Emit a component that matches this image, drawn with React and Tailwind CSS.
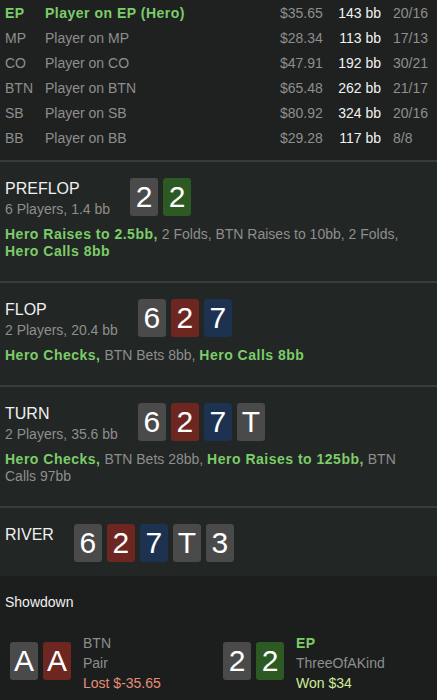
import React from 'react';

const players = [
    { pos: 'EP', name: 'Player on EP (Hero)', money: '$35.65', bb: '143 bb', ratio: '20/16', hero: true },
    { pos: 'MP', name: 'Player on MP', money: '$28.34', bb: '113 bb', ratio: '17/13' },
    { pos: 'CO', name: 'Player on CO', money: '$47.91', bb: '192 bb', ratio: '30/21' },
    { pos: 'BTN', name: 'Player on BTN', money: '$65.48', bb: '262 bb', ratio: '21/17' },
    { pos: 'SB', name: 'Player on SB', money: '$80.92', bb: '324 bb', ratio: '20/16' },
    { pos: 'BB', name: 'Player on BB', money: '$29.28', bb: '117 bb', ratio: '8/8' },
];

const suitBg = {
    s: 'bg-[#4a4a4a]',
    h: 'bg-[#6e2620]',
    d: 'bg-[#1d3150]',
    c: 'bg-[#2c5a22]',
};

const Card = ({ rank, suit }) => (
    <div className={`w-[28px] h-[38px] rounded-[3px] flex items-center justify-center text-[30px] leading-none text-white ${suitBg[suit]}`}>
        {rank}
    </div>
);

const Cards = ({ cards }) => (
    <div className="flex gap-[5px]">
        {cards.map((c, i) => <Card key={i} rank={c[0]} suit={c[1]} />)}
    </div>
);

const Hero = ({ children }) => <span className="font-bold tracking-[0.5px] text-[#7ccc6a]">{children}</span>;
const Other = ({ children }) => <span className="text-[#8e8e8e]">{children}</span>;

const Street = ({ name, sub, cards, children, last }) => (
    <section className={`border-t-2 border-[#383c3a] bg-[#222624] pl-[5px] pr-2 pt-4 ${last ? 'pb-[14px]' : 'pb-[21px]'}`}>
        <div className="flex items-start gap-5 h-[38px]">
            <div>
                <div className="text-[16px] leading-[22px] text-[#f0f0f0]">{name}</div>
                {sub && <div className="text-[14px] leading-[18px] text-[#8e8e8e] whitespace-nowrap">{sub}</div>}
            </div>
            <Cards cards={cards} />
        </div>
        {children && <p className="mt-[10px] text-[14px] leading-[17px] whitespace-nowrap">{children}</p>}
    </section>
);

const App = () => {
    return (
        <div className="w-[437px] h-[700px] overflow-hidden bg-[#1e2120] font-['Liberation_Sans',Arial,sans-serif] flex flex-col">
            <div className="pt-[1px] pb-[9px]">
                {players.map(p => (
                    <div key={p.pos} className="flex items-center h-[25px] text-[14px] whitespace-nowrap">
                        <span className={`w-[45px] pl-[5px] ${p.hero ? 'font-bold tracking-[0.5px] text-[#7ccc6a]' : 'text-[#8e8e8e]'}`}>{p.pos}</span>
                        <span className={`w-[235px] ${p.hero ? 'font-bold tracking-[0.5px] text-[#7ccc6a]' : 'text-[#8e8e8e]'}`}>{p.name}</span>
                        <span className="w-[56px] text-[#8e8e8e]">{p.money}</span>
                        <span className="w-[45px] text-right text-[#f2f2f2]">{p.bb}</span>
                        <span className="pl-[12px] text-[#8e8e8e]">{p.ratio}</span>
                    </div>
                ))}
            </div>

            <Street name="PREFLOP" sub="6 Players, 1.4 bb" cards={['2s', '2c']}>
                <Hero>Hero Raises to 2.5bb,</Hero> <Other>2 Folds, BTN Raises to 10bb, 2 Folds,</Other>
                <br />
                <Hero>Hero Calls 8bb</Hero>
            </Street>

            <Street name="FLOP" sub="2 Players, 20.4 bb" cards={['6s', '2h', '7d']}>
                <Hero>Hero Checks,</Hero> <Other>BTN Bets 8bb,</Other> <Hero>Hero Calls 8bb</Hero>
            </Street>

            <Street name="TURN" sub="2 Players, 35.6 bb" cards={['6s', '2h', '7d', 'Ts']}>
                <Hero>Hero Checks,</Hero> <Other>BTN Bets 28bb,</Other> <Hero>Hero Raises to 125bb,</Hero>{' '}
                <Other>BTN</Other>
                <br />
                <Other>Calls 97bb</Other>
            </Street>

            <Street name="RIVER" cards={['6s', '2h', '7d', 'Ts', '3s']} last />

            <section className="bg-[#1b1e1d] px-[5px] pt-[18px] flex-1">
                <div className="text-[14px] leading-[17px] text-[#f0f0f0]">Showdown</div>
                <div className="flex mt-[22px] pl-[5px]">
                    <div className="flex gap-3 w-[213px]">
                        <div className="pt-[9px]"><Cards cards={['As', 'Ah']} /></div>
                        <div className="text-[14px] leading-[20px]">
                            <div className="text-[#8e8e8e]">BTN</div>
                            <div className="text-[#8e8e8e]">Pair</div>
                            <div className="text-[#e88c78]">Lost $-35.65</div>
                        </div>
                    </div>
                    <div className="flex gap-3">
                        <div className="pt-[9px]"><Cards cards={['2s', '2c']} /></div>
                        <div className="text-[14px] leading-[20px]">
                            <div className="font-bold tracking-[0.5px] text-[#7ccc6a]">EP</div>
                            <div className="text-[#8e8e8e]">ThreeOfAKind</div>
                            <div className="text-[#d0ec98]">Won $34</div>
                        </div>
                    </div>
                </div>
            </section>
        </div>
    );
};

export default App;
